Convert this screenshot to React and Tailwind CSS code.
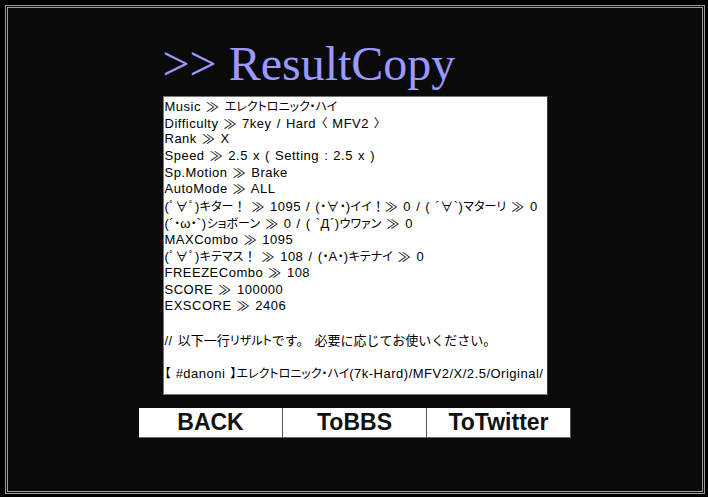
import React from "react";

const lines = [
  "Music ≫ エレクトロニック・ハイ",
  "Difficulty ≫ 7key / Hard 〈 MFV2 〉",
  "Rank ≫ X",
  "Speed ≫ 2.5 x ( Setting : 2.5 x )",
  "Sp.Motion ≫ Brake",
  "AutoMode ≫ ALL",
  "(ﾟ∀ﾟ)キター！ ≫ 1095 / (・∀・)イイ！≫ 0 / ( ´∀`)マターリ ≫ 0",
  "(´・ω・`)ショボーン ≫ 0 / ( `Д´)ウワァン ≫ 0",
  "MAXCombo ≫ 1095",
  "(ﾟ∀ﾟ)キテマス！ ≫ 108 / (・A・)キテナイ ≫ 0",
  "FREEZECombo ≫ 108",
  "SCORE ≫ 100000",
  "EXSCORE ≫ 2406",
  "",
  "// 以下一行リザルトです。 必要に応じてお使いください。",
  "",
  "【 #danoni 】エレクトロニック・ハイ(7k-Hard)/MFV2/X/2.5/Original/",
];

const buttons = ["BACK", "ToBBS", "ToTwitter"];

// katakana and brackets are set proportional, kanji / hiragana full width
const runClass = {
  latin: "",
  kata: "font-['Noto_Sans_CJK_JP',sans-serif] text-[12px] tracking-normal [word-spacing:0] [font-feature-settings:'palt']",
  wide: "font-['Noto_Sans_CJK_JP',sans-serif] text-[13px] tracking-normal [word-spacing:0]",
};

function kind(ch) {
  if (/[\u30A0-\u30FF\u3008-\u3011\uFF65-\uFF9F]/.test(ch)) return "kata";
  if (/[\u3000-\u303F\u3040-\u309F\u4E00-\u9FFF\uFF01-\uFF0F]/.test(ch)) return "wide";
  return "latin";
}

function splitRuns(line) {
  const out = [];
  let cur = null;
  for (const ch of line) {
    const t = kind(ch);
    if (cur && cur.t === t) cur.s += ch;
    else {
      cur = { t, s: ch };
      out.push(cur);
    }
  }
  return out;
}

export default function App() {
  return (
    <div className="h-[497px] w-[708px] overflow-hidden bg-black pl-[5px] pt-[5px]">
      <div className="flex h-[489px] w-[700px] flex-col items-center border-[3px] border-double border-[#9a9a9a] bg-[#0a0a0a]">
        {/* title */}
        <div className="mt-[32px] w-[385px]">
          <h1 className="font-['Liberation_Serif','Times_New_Roman',serif] text-[48px] leading-[48px] text-[#9999ff]">
            &gt;&gt; ResultCopy
          </h1>
        </div>

        {/* result text */}
        <div className="mt-[8px] h-[299px] w-[385px] overflow-hidden border border-[#767676] border-r-[#3a3a3a] bg-white py-[1px] pl-[1px] font-['Liberation_Sans','Noto_Sans_CJK_JP',sans-serif] text-[13px] leading-[16.7px] tracking-[0.5px] text-black [word-spacing:1px]">
          {lines.map((line, i) => (
            <div key={i} className="h-[16.7px] whitespace-pre">
              {splitRuns(line).map((r, j) => (
                <span key={j} className={runClass[r.t]}>
                  {r.s}
                </span>
              ))}
            </div>
          ))}
        </div>

        {/* buttons */}
        <div className="mt-[13px] flex">
          {buttons.map((b) => (
            <button
              key={b}
              className="h-[30px] w-[144px] border-b border-r border-b-[#6a6a6a] border-r-[#555] bg-white font-['Liberation_Sans',Arial,sans-serif] text-[23px] font-bold leading-none text-[#111]"
            >
              {b}
            </button>
          ))}
        </div>
      </div>
    </div>
  );
}
